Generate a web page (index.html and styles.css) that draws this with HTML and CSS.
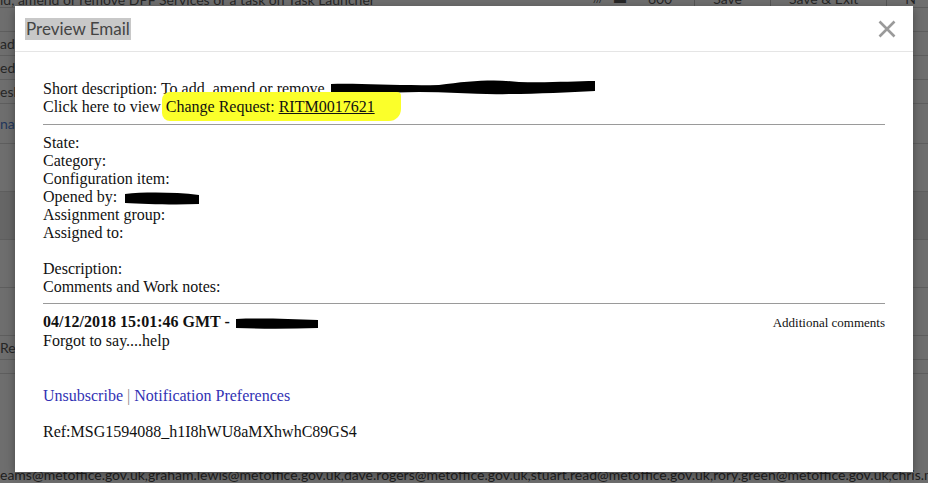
FILE: index.html
```html
<!DOCTYPE html>
<html lang="en">
<head>
    <meta charset="UTF-8">
    <title>Preview Email</title>
    <link rel="stylesheet" href="styles.css">
</head>
<body>
    <!-- page behind the dialog -->
    <div class="page">
        <div class="page-top">
            <div class="page-crumb">ld, amend or remove DPF Services or a task on Task Launcher</div>
            <div class="page-actions">
                <span class="act-icon">///</span>
                <span class="act-icon">▬</span>
                <span class="act">600</span>
                <span class="act btn">Save</span>
                <span class="act btn">Save &amp; Exit</span>
                <span class="act btn">N</span>
            </div>
        </div>
        <div class="page-rows">
            <div class="row">&nbsp;</div>
            <div class="row">ady</div>
            <div class="row">ed I</div>
            <div class="row">esk</div>
            <div class="row link">nai</div>
            <div class="row tall">&nbsp;</div>
            <div class="row tall dark">&nbsp;</div>
            <div class="row tall">&nbsp;</div>
            <div class="row tall">&nbsp;</div>
            <div class="row">Req</div>
            <div class="row short">&nbsp;</div>
        </div>
        <div class="page-bottom">eams@metoffice.gov.uk,graham.lewis@metoffice.gov.uk,dave.rogers@metoffice.gov.uk,stuart.read@metoffice.gov.uk,rory.green@metoffice.gov.uk,chris.mcgrath@metoffice.gov.uk</div>
    </div>

    <div class="modal">
        <div class="modal-header">
            <span class="modal-title">Preview Email</span>
            <svg class="close" width="18" height="18" viewBox="0 0 18 18">
                <path d="M1.5 1.5 L16.5 16.5 M16.5 1.5 L1.5 16.5" stroke="#9a9a9a" stroke-width="2.6" fill="none"/>
            </svg>
        </div>
        <div class="modal-body">
            <div class="mail">
                <div>Short description: To add, amend or remove <svg class="redact r1" width="268" height="18" viewBox="0 0 268 18"><path d="M2 5 C30 4 70 7 110 6 C140 2 165 0 190 3 C220 4 245 2 266 2 L266 12 C240 13 210 15 180 15 C150 16 120 13 90 13 C60 14 30 14 2 13 Z" fill="#000"/></svg></div>
                <div>Click here to view <span class="hl">Change Request: <u>RITM0017621</u></span></div>
                <hr>
                <div>State:</div>
                <div>Category:</div>
                <div>Configuration item:</div>
                <div>Opened by: <svg class="redact r2" width="76" height="15" viewBox="0 0 76 15"><path d="M1 3 C20 1 50 1 75 4 L75 13 C50 14 20 13 1 12 Z" fill="#000"/></svg></div>
                <div>Assignment group:</div>
                <div>Assigned to:</div>
                <div class="gap">Description:</div>
                <div>Comments and Work notes:</div>
                <hr class="hr2">
                <div class="entry-head">
                    <b>04/12/2018 15:01:46 GMT - <svg class="redact r3" width="84" height="13" viewBox="0 0 84 13"><path d="M1 2 C25 1 55 2 83 3 L83 11 C55 12 25 12 1 11 Z" fill="#000"/></svg></b>
                    <span class="entry-type">Additional comments</span>
                </div>
                <div>Forgot to say....help</div>
                <div class="links"><a href="#">Unsubscribe</a> <span class="sep">|</span> <a href="#">Notification Preferences</a></div>
                <div class="ref">Ref:MSG1594088_h1I8hWU8aMXhwhC89GS4</div>
            </div>
        </div>
    </div>
</body>
</html>
```

FILE: styles.css
```css
* {
    margin: 0;
    padding: 0;
    box-sizing: border-box;
}

body {
    width: 928px;
    height: 483px;
    overflow: hidden;
    background: #6e6e6e;
    font-family: 'Lato', 'Open Sans', sans-serif;
    position: relative;
}

/* background page, dimmed */
.page {
    height: 483px;
    display: flex;
    flex-direction: column;
    color: #262626;
    font-size: 14px;
}

.page-top {
    height: 8px;
    display: flex;
    justify-content: space-between;
    line-height: 14px;
    border-bottom: 1px solid #5c5c5c;
}

.page-crumb {
    margin-top: -7px;
    white-space: nowrap;
}

.page-actions {
    display: flex;
    gap: 10px;
    margin-top: -8px;
    margin-right: -6px;
}

.act-icon {
    font-size: 12px;
}

.act {
    padding: 0 12px;
}

.act.btn {
    border-left: 1px solid #555;
    padding: 0 18px;
}

.page-rows {
    flex: 1;
    display: flex;
    flex-direction: column;
}

.row {
    height: 24px;
    line-height: 24px;
    border-bottom: 1px solid #5e5e5e;
    white-space: nowrap;
    overflow: hidden;
}

.row.link {
    color: #22365c;
    height: 40px;
    line-height: 40px;
}

.row.tall {
    height: 48px;
}

.row.dark {
    background: #666;
}

.row.short {
    height: 14px;
}

.page-bottom {
    height: 14px;
    line-height: 12px;
    white-space: nowrap;
    overflow: hidden;
    color: #202020;
}

/* dialog */
.modal {
    position: absolute;
    left: 15px;
    top: 6px;
    width: 898px;
    height: 466px;
    background: #fff;
    box-shadow: 0 3px 9px rgba(0, 0, 0, 0.35);
}

.modal-header {
    height: 46px;
    border-bottom: 1px solid #e5e5e5;
    display: flex;
    align-items: center;
    justify-content: space-between;
    padding: 0 17px 0 10px;
}

.modal-title {
    background: #c8c8c8;
    color: #444;
    font-size: 17px;
    line-height: 22px;
    padding: 0 1px;
    margin-top: 1px;
}

.close {
    display: block;
    margin-top: 1px;
}

.modal-body {
    padding: 28px 28px 0 28px;
}

.mail {
    font-family: 'Liberation Serif', 'Times New Roman', serif;
    font-size: 16px;
    line-height: 18px;
    color: #111;
}

.redact {
    vertical-align: middle;
}

.redact.r1 {
    margin-left: 0;
    margin-top: -4px;
}

.redact.r2 {
    margin-left: 3px;
}

.redact.r3 {
    margin-left: 1px;
}

.hl {
    background: #fbff2a;
    padding: 6px 26px 6px 4px;
    margin-left: -3px;
    border-radius: 8px 4px 12px 8px;
}

.hl u {
    color: #111;
}

hr {
    border: 0;
    border-top: 1px solid #9a9a9a;
    margin: 8px 0 9px;
}

hr.hr2 {
    margin: 7px 0 9px;
}

.gap {
    margin-top: 18px;
}

.entry-head {
    display: flex;
    justify-content: space-between;
    align-items: baseline;
}

.entry-type {
    font-size: 13px;
}

.links {
    margin-top: 37px;
    color: #888;
}

.links a {
    color: #3232b4;
    text-decoration: none;
}

.ref {
    margin-top: 18px;
}
```
